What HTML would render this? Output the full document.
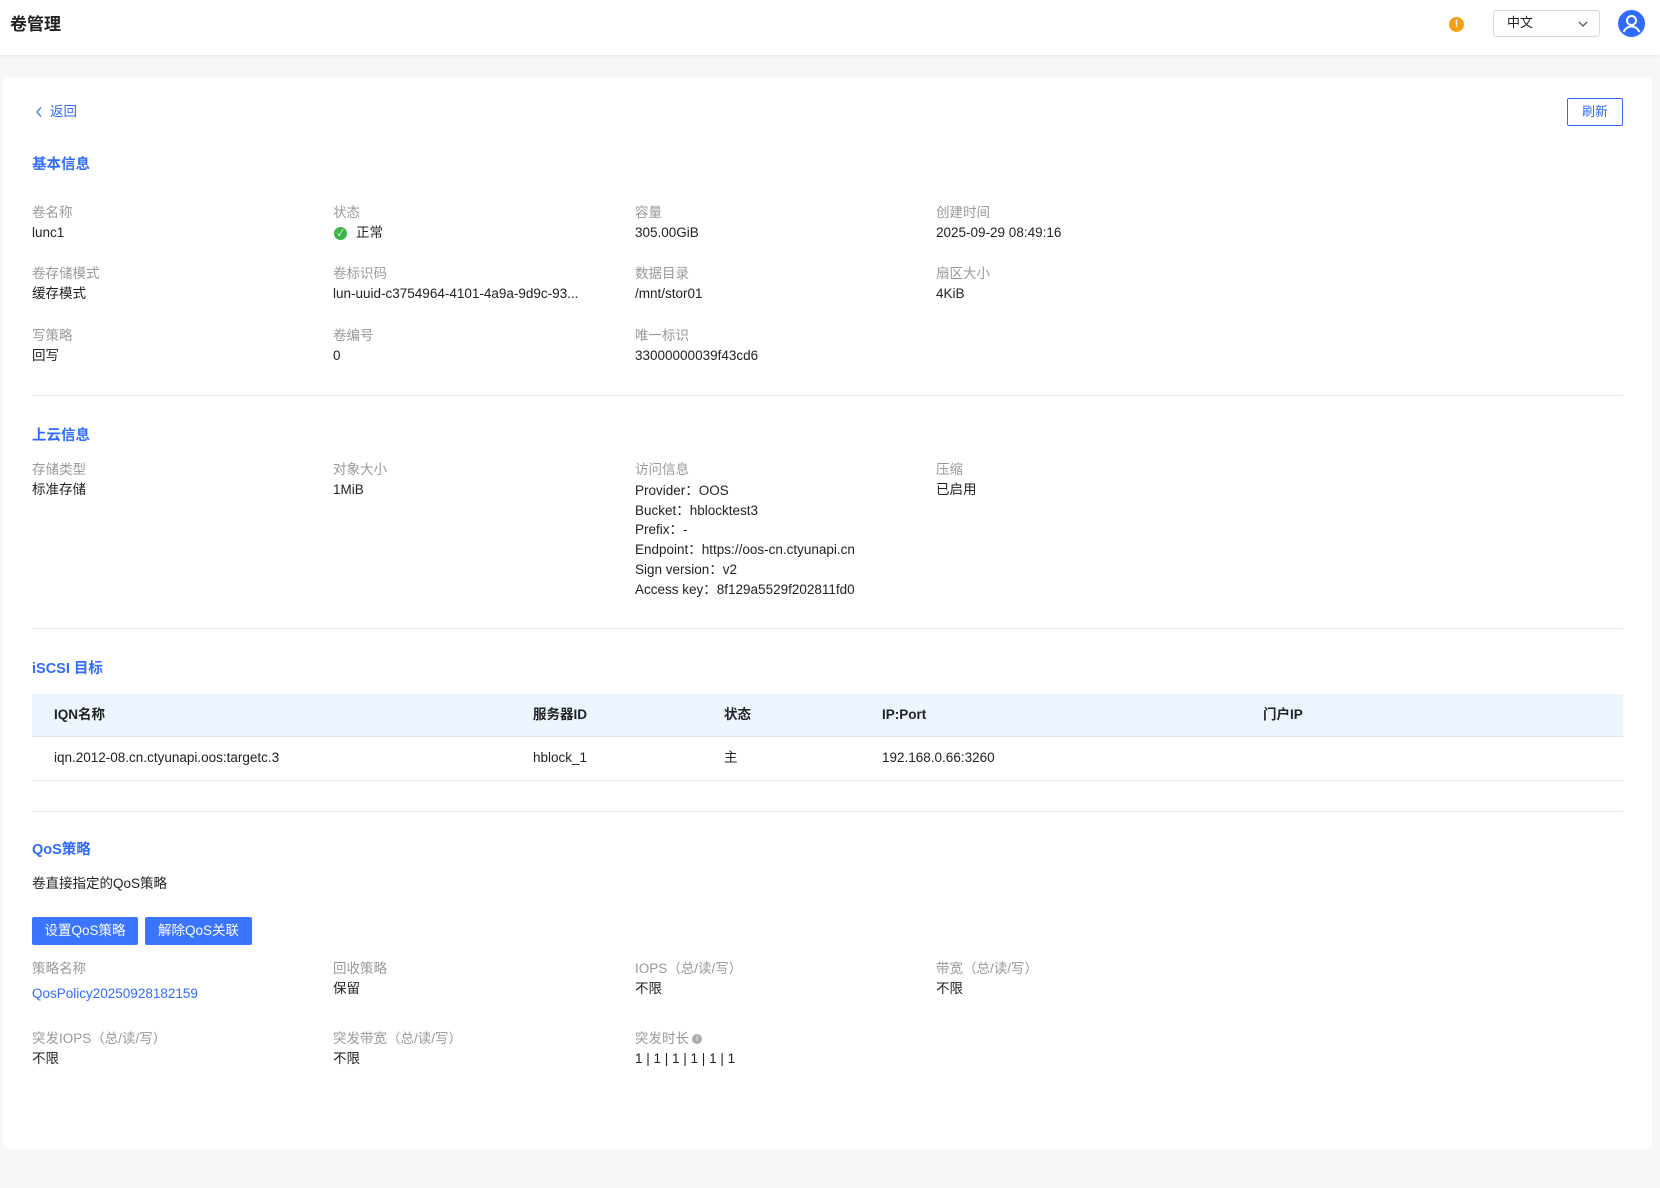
<!DOCTYPE html>
<html><head><meta charset="utf-8"><style>
*{margin:0;padding:0;box-sizing:border-box}
body{width:1660px;height:1188px;background:#f7f7f7;font-family:"Liberation Sans","Noto Sans CJK SC",sans-serif;font-size:13.5px;color:#222;position:relative;overflow:hidden}
.a{position:absolute;white-space:nowrap;line-height:18px}
.hdr{position:absolute;left:0;top:0;width:1660px;height:55px;background:#fff;box-shadow:0 1px 3px rgba(0,0,0,.08)}
.card{position:absolute;left:3px;top:77px;width:1649px;height:1072px;background:#fff;border-radius:4px}
.l{color:#999}
.v{color:#222}
.t{color:#2f6bff;font-weight:bold;font-size:14.5px}
.hr{position:absolute;left:32px;width:1591px;height:1px;background:#e6e6e6}
.btn{position:absolute;background:#3a74ff;color:#fff;font-size:13.5px;text-align:center;line-height:28px;border-radius:2px}
</style></head><body>
<div class="hdr"></div>
<div class="a" style="left:10px;top:14px;font-size:17px;font-weight:bold;line-height:22px">卷管理</div>
<div class="a" style="left:1449px;top:17px;width:15px;height:15px;border-radius:50%;background:#f5a012;color:#fff;font-size:11px;text-align:center;line-height:15px;font-weight:bold">!</div>
<div class="a" style="left:1493px;top:10px;width:107px;height:27px;border:1px solid #d9d9d9;border-radius:3px;background:#fff"></div>
<div class="a" style="left:1507px;top:14px;font-size:13px">中文</div>
<svg class="a" style="left:1577px;top:18px" width="12" height="12" viewBox="0 0 12 12"><path d="M2 4l4 4 4-4" fill="none" stroke="#555" stroke-width="1.3"/></svg>
<svg class="a" style="left:1618px;top:10px" width="27" height="27" viewBox="0 0 27 27"><circle cx="13.5" cy="13.5" r="13.5" fill="#2f6bff"/><circle cx="13.5" cy="10.5" r="4.5" fill="none" stroke="#fff" stroke-width="2"/><path d="M5.5 22c2-4 5-5.5 8-5.5s6 1.5 8 5.5" fill="none" stroke="#fff" stroke-width="2"/></svg>

<div class="card"></div>
<svg class="a" style="left:34px;top:106px" width="10" height="12" viewBox="0 0 10 12"><path d="M7 1.5L3 6l4 4.5" fill="none" stroke="#2f6bff" stroke-width="1.3"/></svg>
<div class="a" style="left:50px;top:103px;color:#2f6bff">返回</div>
<div class="a" style="left:1567px;top:98px;width:56px;height:28px;border:1px solid #2f6bff;border-radius:2px;color:#2f6bff;text-align:center;line-height:26px;font-size:13px">刷新</div>

<div class="a t" style="left:32px;top:156px">基本信息</div>
<div class="a l" style="left:32px;top:204px">卷名称</div><div class="a v" style="left:32px;top:224px">lunc1</div>
<div class="a l" style="left:333px;top:204px">状态</div>
<div class="a" style="left:334px;top:227px;width:13px;height:13px;border-radius:50%;background:#3ab54a;color:#fff;font-size:9px;text-align:center;line-height:13px">✓</div>
<div class="a v" style="left:356px;top:224px">正常</div>
<div class="a l" style="left:635px;top:204px">容量</div><div class="a v" style="left:635px;top:224px">305.00GiB</div>
<div class="a l" style="left:936px;top:204px">创建时间</div><div class="a v" style="left:936px;top:224px">2025-09-29 08:49:16</div>

<div class="a l" style="left:32px;top:265px">卷存储模式</div><div class="a v" style="left:32px;top:285px">缓存模式</div>
<div class="a l" style="left:333px;top:265px">卷标识码</div><div class="a v" style="left:333px;top:285px">lun-uuid-c3754964-4101-4a9a-9d9c-93...</div>
<div class="a l" style="left:635px;top:265px">数据目录</div><div class="a v" style="left:635px;top:285px">/mnt/stor01</div>
<div class="a l" style="left:936px;top:265px">扇区大小</div><div class="a v" style="left:936px;top:285px">4KiB</div>

<div class="a l" style="left:32px;top:327px">写策略</div><div class="a v" style="left:32px;top:347px">回写</div>
<div class="a l" style="left:333px;top:327px">卷编号</div><div class="a v" style="left:333px;top:347px">0</div>
<div class="a l" style="left:635px;top:327px">唯一标识</div><div class="a v" style="left:635px;top:347px">33000000039f43cd6</div>

<div class="hr" style="top:395px"></div>
<div class="a t" style="left:32px;top:427px">上云信息</div>
<div class="a l" style="left:32px;top:461px">存储类型</div><div class="a v" style="left:32px;top:481px">标准存储</div>
<div class="a l" style="left:333px;top:461px">对象大小</div><div class="a v" style="left:333px;top:481px">1MiB</div>
<div class="a l" style="left:635px;top:461px">访问信息</div>
<div class="a v" style="left:635px;top:481px;line-height:19.7px;white-space:pre">Provider：OOS
Bucket：hblocktest3
Prefix：-
Endpoint：https://oos-cn.ctyunapi.cn
Sign version：v2
Access key：8f129a5529f202811fd0</div>
<div class="a l" style="left:936px;top:461px">压缩</div><div class="a v" style="left:936px;top:481px">已启用</div>

<div class="hr" style="top:628px"></div>
<div class="a t" style="left:32px;top:660px">iSCSI 目标</div>
<div class="a" style="left:32px;top:694px;width:1591px;height:43px;background:#ecf4fe;border-bottom:1px solid #e3e8f0"></div>
<div class="a" style="left:54px;top:706px;font-weight:bold">IQN名称</div>
<div class="a" style="left:533px;top:706px;font-weight:bold">服务器ID</div>
<div class="a" style="left:724px;top:706px;font-weight:bold">状态</div>
<div class="a" style="left:882px;top:706px;font-weight:bold">IP:Port</div>
<div class="a" style="left:1263px;top:706px;font-weight:bold">门户IP</div>
<div class="a" style="left:32px;top:780px;width:1591px;height:1px;background:#e6e9f0"></div>
<div class="a v" style="left:54px;top:749px">iqn.2012-08.cn.ctyunapi.oos:targetc.3</div>
<div class="a v" style="left:533px;top:749px">hblock_1</div>
<div class="a v" style="left:724px;top:749px">主</div>
<div class="a v" style="left:882px;top:749px">192.168.0.66:3260</div>

<div class="hr" style="top:811px"></div>
<div class="a t" style="left:32px;top:841px">QoS策略</div>
<div class="a v" style="left:32px;top:875px">卷直接指定的QoS策略</div>
<div class="btn" style="left:32px;top:917px;width:106px;height:28px">设置QoS策略</div>
<div class="btn" style="left:145px;top:917px;width:107px;height:28px">解除QoS关联</div>

<div class="a l" style="left:32px;top:960px">策略名称</div><div class="a" style="left:32px;top:985px;color:#2f6bff">QosPolicy20250928182159</div>
<div class="a l" style="left:333px;top:960px">回收策略</div><div class="a v" style="left:333px;top:980px">保留</div>
<div class="a l" style="left:635px;top:960px">IOPS（总/读/写）</div><div class="a v" style="left:635px;top:980px">不限</div>
<div class="a l" style="left:936px;top:960px">带宽（总/读/写）</div><div class="a v" style="left:936px;top:980px">不限</div>

<div class="a l" style="left:32px;top:1030px">突发IOPS（总/读/写）</div><div class="a v" style="left:32px;top:1050px">不限</div>
<div class="a l" style="left:333px;top:1030px">突发带宽（总/读/写）</div><div class="a v" style="left:333px;top:1050px">不限</div>
<div class="a l" style="left:635px;top:1030px">突发时长</div>
<div class="a" style="left:692px;top:1034px;width:10px;height:10px;border-radius:50%;background:#aaa;color:#fff;font-size:8px;text-align:center;line-height:10px">i</div>
<div class="a v" style="left:635px;top:1050px">1 | 1 | 1 | 1 | 1 | 1</div>
</body></html>
